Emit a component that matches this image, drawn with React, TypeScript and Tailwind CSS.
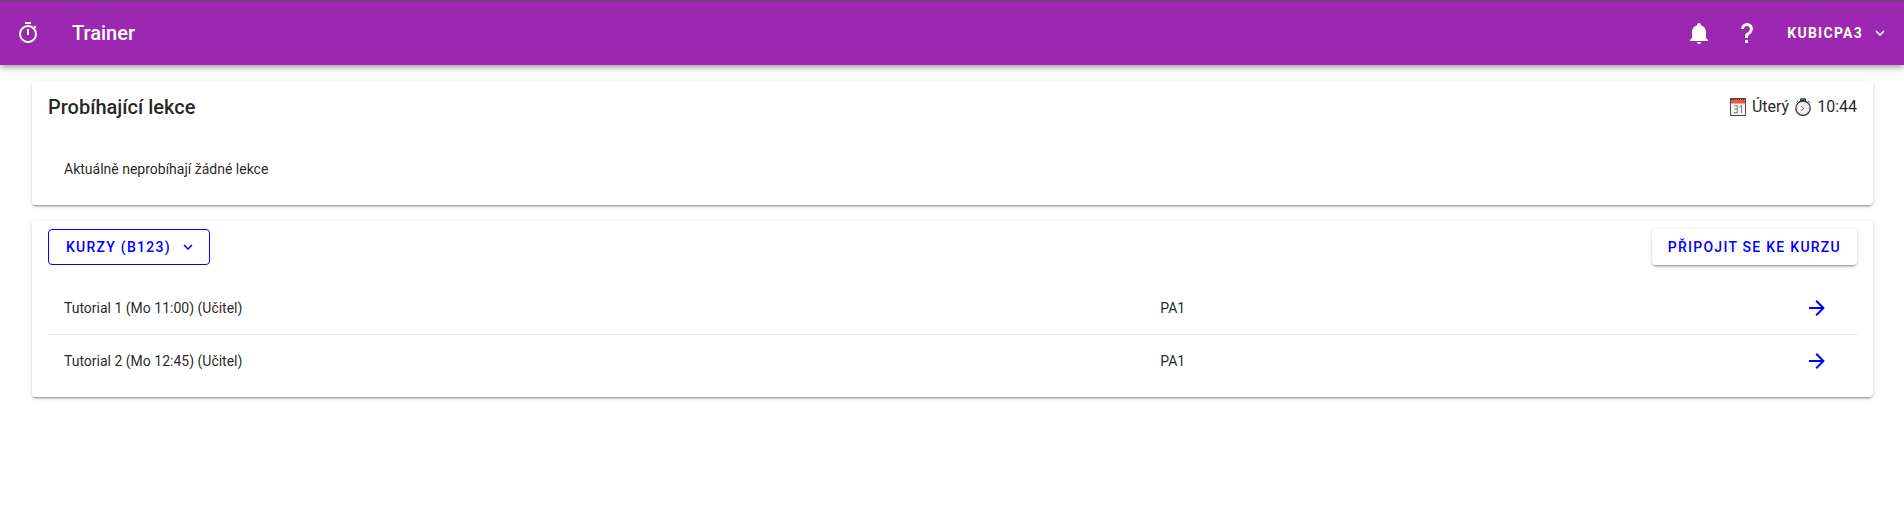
const icons = {
  timer:
    "M12,20A7,7 0 0,1 5,13A7,7 0 0,1 12,6A7,7 0 0,1 19,13A7,7 0 0,1 12,20M19.03,7.39L20.45,5.97C20,5.46 19.55,5 19.04,4.56L17.62,6C16.07,4.74 14.12,4 12,4A9,9 0 0,0 3,13A9,9 0 0,0 12,22C17,22 21,17.97 21,13C21,10.88 20.26,8.93 19.03,7.39M11,14H13V8H11M15,1H9V3H15V1Z",
  bell:
    "M21,19V20H3V19L5,17V11C5,7.9 7.03,5.17 10,4.29C10,4.19 10,4.1 10,4A2,2 0 0,1 12,2A2,2 0 0,1 14,4C14,4.1 14,4.19 14,4.29C16.97,5.17 19,7.9 19,11V17L21,19M14,21A2,2 0 0,1 12,23A2,2 0 0,1 10,21",
  help:
    "M10,19H13V22H10V19M12,2C17.35,2.22 19.68,7.62 16.5,11.67C15.67,12.67 14.33,13.33 13.67,14.17C13,15 13,16 13,17H10C10,15.33 10,13.92 10.67,12.92C11.33,11.92 12.67,11.33 13.5,10.67C15.92,8.43 15.32,5.26 12,5A3,3 0 0,0 9,8H6A6,6 0 0,1 12,2Z",
  chevron: "M7.41,8.58L12,13.17L16.59,8.58L18,10L12,16L6,10L7.41,8.58Z",
  arrow:
    "M4,11V13H16L10.5,18.5L11.92,19.92L19.84,12L11.92,4.08L10.5,5.5L16,11H4Z",
};

function Icon({ name, className = "size-6" }: { name: keyof typeof icons; className?: string }) {
  return (
    <svg viewBox="0 0 24 24" fill="currentColor" className={className} aria-hidden="true">
      <path d={icons[name]} />
    </svg>
  );
}

function CalendarIcon() {
  return (
    <svg viewBox="0 0 16 18" className="h-[18px] w-4" aria-hidden="true">
      <rect x="0.5" y="0.5" width="15" height="17" fill="#f4f4f4" stroke="#4a4a4a" />
      <rect x="1" y="1" width="14" height="4.5" fill="#f0553a" />
      <path d="M1 1.5H15" stroke="#4a2a2a" strokeDasharray="1 1" />
      <path
        d="M3.8 7.8H7.3V14.6H3.8M4.6 11.1H7.3M9.4 9L11.5 7.8V15.1"
        fill="none"
        stroke="#8a8a8a"
        strokeWidth="1.1"
      />
    </svg>
  );
}

function StopwatchIcon() {
  return (
    <svg viewBox="0 0 16 18" className="h-[18px] w-4" aria-hidden="true">
      <circle cx="8" cy="10.2" r="7.2" fill="#f8f8f8" stroke="#303030" strokeWidth="1.3" />
      <circle cx="8" cy="10.2" r="5.2" fill="none" stroke="#bbb" strokeWidth="0.8" strokeDasharray="0.8 1.8" />
      <path d="M5.6 0.8H10.4V2.8H5.6ZM13 2.8L14.8 4.6M3 2.8L1.4 4.4" fill="#777" stroke="#303030" />
      <path d="M8.8 10.3L6.4 12.6" fill="none" stroke="#f03a3a" strokeWidth="1.1" />
      <path d="M6 8L8.8 10.3" fill="none" stroke="#8a6a6a" strokeWidth="1" />
    </svg>
  );
}

const cardClass =
  "rounded bg-white shadow-[0_3px_1px_-2px_rgba(0,0,0,0.2),0_2px_2px_0_rgba(0,0,0,0.14),0_1px_5px_0_rgba(0,0,0,0.12)]";

const courses = [
  { name: "Tutorial 1 (Mo 11:00) (Učitel)", subject: "PA1" },
  { name: "Tutorial 2 (Mo 12:45) (Učitel)", subject: "PA1" },
];

export default function App() {
  return (
    <div className="min-h-screen bg-white font-['Roboto',sans-serif] text-black/87">
      <header className="flex h-[65px] items-center justify-between border-t border-[#555555] bg-[#9c27b0] pr-[15px] pl-4 text-white shadow-[0_2px_4px_-1px_rgba(0,0,0,0.2),0_4px_5px_0_rgba(0,0,0,0.14),0_1px_10px_0_rgba(0,0,0,0.12)]">
        <div className="flex items-center gap-8">
          <Icon name="timer" />
          <a href="#" className="text-xl font-medium">
            Trainer
          </a>
        </div>
        <div className="flex items-center">
          <button type="button" aria-label="Oznámení" className="grid size-12 place-items-center">
            <Icon name="bell" />
          </button>
          <button type="button" aria-label="Nápověda" className="grid size-12 place-items-center">
            <Icon name="help" />
          </button>
          <button
            type="button"
            className="flex h-9 items-center gap-2 pl-4 text-sm font-bold tracking-[0.09em]"
          >
            KUBICPA3
            <Icon name="chevron" className="size-[18px]" />
          </button>
        </div>
      </header>

      <main className="flex flex-col gap-4 py-4 pr-[31px] pl-8">
        <section className={cardClass}>
          <div className="flex h-[52px] items-center justify-between px-4">
            <h2 className="text-xl font-medium">Probíhající lekce</h2>
            <div className="flex items-center gap-1.5 text-base">
              <CalendarIcon />
              <span>Úterý</span>
              <StopwatchIcon />
              <time>10:44</time>
            </div>
          </div>
          <p className="px-8 py-[26px] text-sm">Aktuálně neprobíhají žádné lekce</p>
        </section>

        <section className={cardClass}>
          <div className="flex items-center justify-between px-4 py-2">
            <button
              type="button"
              className="flex h-9 items-center gap-2 rounded border border-[#0000ff] pr-3 pl-[17px] text-sm font-medium tracking-[0.09em] text-[#0000ff]"
            >
              KURZY (B123)
              <Icon name="chevron" className="size-[18px]" />
            </button>
            <button
              type="button"
              className={`${cardClass} h-9 px-4 text-sm font-medium tracking-[0.09em] text-[#0000ff]`}
            >
              PŘIPOJIT SE KE KURZU
            </button>
          </div>
          <div className="px-4 pt-2 pb-[10px]">
            <table className="w-full border-separate border-spacing-0 text-sm">
              <tbody>
                {courses.map((course) => (
                  <tr key={course.name} className="group h-[54px] last:h-[52px]">
                    <td className="w-[60.6%] border-b border-black/12 px-4 group-last:border-transparent">
                      {course.name}
                    </td>
                    <td className="border-b border-black/12 px-4 group-last:border-transparent">
                      {course.subject}
                    </td>
                    <td className="border-b border-black/12 px-4 group-last:border-transparent">
                      <a
                        href="#"
                        aria-label={course.name}
                        className="ml-auto grid h-9 w-12 place-items-center text-[#0000ff]"
                      >
                        <Icon name="arrow" />
                      </a>
                    </td>
                  </tr>
                ))}
              </tbody>
            </table>
          </div>
        </section>
      </main>
    </div>
  );
}
